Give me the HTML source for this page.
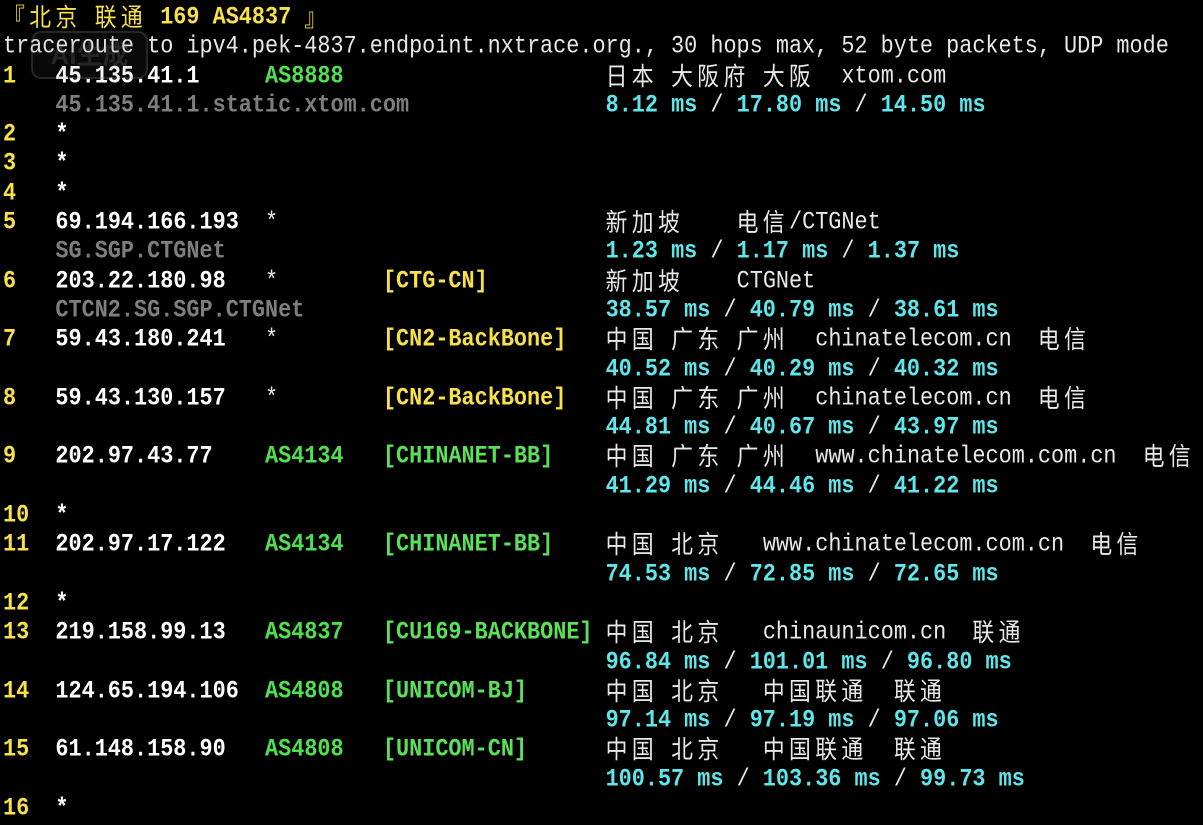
<!DOCTYPE html>
<html><head><meta charset="utf-8"><style>
html,body{margin:0;padding:0;background:#000;width:1203px;height:819px;overflow:hidden}
.t{position:absolute;left:3px;top:3px;font-family:"Liberation Mono",monospace;font-size:21.83px;color:#f2f2f2}
.t div{white-space:pre;height:29.3px;line-height:29.3px;overflow:visible;transform:scaleY(1.15);transform-origin:50% 55%}
.c{letter-spacing:0.2em;font-family:"Noto Sans CJK SC",sans-serif;font-weight:normal;line-height:20px;display:inline-block;height:20px;vertical-align:-2px}
.y{color:#f7e04a;font-weight:bold}
.yn{color:#f7e04a}
.w{color:#ffffff;font-weight:bold}
.g{color:#4fe04f;font-weight:bold}
.gt{color:#5be05a;font-weight:bold}
.gy{color:#7e7e7e;font-weight:bold}
.cy{color:#5ee6ea;font-weight:bold}
.n{color:#e8e8e8}
.wm{position:absolute;left:31px;top:31px;width:113px;height:44px;border:2px solid rgba(140,140,140,.22);border-radius:10px;background:rgba(120,120,120,.08);color:rgba(150,150,150,.2);font:bold 26px "Liberation Sans","Noto Sans CJK SC",sans-serif;line-height:44px;text-align:center;z-index:2}
</style></head><body>
<div class="wm">AI生成</div>
<div class="t">
<div><span class="yn"><span class="c">『北京</span> <span class="c">联通</span></span> <span class="y">169 AS4837</span> <span class="yn c">』</span></div>
<div><span class="n">traceroute to ipv4.pek-4837.endpoint.nxtrace.org., 30 hops max, 52 byte packets, UDP mode</span></div>
<div><span class="y">1</span>   <span class="w">45.135.41.1</span>     <span class="g">AS8888</span>                    <span class="n"><span class="c">日本</span> <span class="c">大阪府</span> <span class="c">大阪</span>  xtom.com</span></div>
<div>    <span class="gy">45.135.41.1.static.xtom.com</span>               <span class="cy">8.12 ms</span> <span class="n">/</span> <span class="cy">17.80 ms</span> <span class="n">/</span> <span class="cy">14.50 ms</span></div>
<div><span class="y">2</span>   <span class="w">*</span></div>
<div><span class="y">3</span>   <span class="w">*</span></div>
<div><span class="y">4</span>   <span class="w">*</span></div>
<div><span class="y">5</span>   <span class="w">69.194.166.193</span>  <span class="n">*</span>                         <span class="n"><span class="c">新加坡</span>    <span class="c">电信</span>/CTGNet</span></div>
<div>    <span class="gy">SG.SGP.CTGNet</span>                             <span class="cy">1.23 ms</span> <span class="n">/</span> <span class="cy">1.17 ms</span> <span class="n">/</span> <span class="cy">1.37 ms</span></div>
<div><span class="y">6</span>   <span class="w">203.22.180.98</span>   <span class="n">*</span>        <span class="y">[CTG-CN]</span>         <span class="n"><span class="c">新加坡</span>    CTGNet</span></div>
<div>    <span class="gy">CTCN2.SG.SGP.CTGNet</span>                       <span class="cy">38.57 ms</span> <span class="n">/</span> <span class="cy">40.79 ms</span> <span class="n">/</span> <span class="cy">38.61 ms</span></div>
<div><span class="y">7</span>   <span class="w">59.43.180.241</span>   <span class="n">*</span>        <span class="y">[CN2-BackBone]</span>   <span class="n"><span class="c">中国</span> <span class="c">广东</span> <span class="c">广州</span>  chinatelecom.cn  <span class="c">电信</span></span></div>
<div>                                              <span class="cy">40.52 ms</span> <span class="n">/</span> <span class="cy">40.29 ms</span> <span class="n">/</span> <span class="cy">40.32 ms</span></div>
<div><span class="y">8</span>   <span class="w">59.43.130.157</span>   <span class="n">*</span>        <span class="y">[CN2-BackBone]</span>   <span class="n"><span class="c">中国</span> <span class="c">广东</span> <span class="c">广州</span>  chinatelecom.cn  <span class="c">电信</span></span></div>
<div>                                              <span class="cy">44.81 ms</span> <span class="n">/</span> <span class="cy">40.67 ms</span> <span class="n">/</span> <span class="cy">43.97 ms</span></div>
<div><span class="y">9</span>   <span class="w">202.97.43.77</span>    <span class="g">AS4134</span>   <span class="gt">[CHINANET-BB]</span>    <span class="n"><span class="c">中国</span> <span class="c">广东</span> <span class="c">广州</span>  www.chinatelecom.com.cn  <span class="c">电信</span></span></div>
<div>                                              <span class="cy">41.29 ms</span> <span class="n">/</span> <span class="cy">44.46 ms</span> <span class="n">/</span> <span class="cy">41.22 ms</span></div>
<div><span class="y">10</span>  <span class="w">*</span></div>
<div><span class="y">11</span>  <span class="w">202.97.17.122</span>   <span class="g">AS4134</span>   <span class="gt">[CHINANET-BB]</span>    <span class="n"><span class="c">中国</span> <span class="c">北京</span>   www.chinatelecom.com.cn  <span class="c">电信</span></span></div>
<div>                                              <span class="cy">74.53 ms</span> <span class="n">/</span> <span class="cy">72.85 ms</span> <span class="n">/</span> <span class="cy">72.65 ms</span></div>
<div><span class="y">12</span>  <span class="w">*</span></div>
<div><span class="y">13</span>  <span class="w">219.158.99.13</span>   <span class="g">AS4837</span>   <span class="gt">[CU169-BACKBONE]</span> <span class="n"><span class="c">中国</span> <span class="c">北京</span>   chinaunicom.cn  <span class="c">联通</span></span></div>
<div>                                              <span class="cy">96.84 ms</span> <span class="n">/</span> <span class="cy">101.01 ms</span> <span class="n">/</span> <span class="cy">96.80 ms</span></div>
<div><span class="y">14</span>  <span class="w">124.65.194.106</span>  <span class="g">AS4808</span>   <span class="gt">[UNICOM-BJ]</span>      <span class="n"><span class="c">中国</span> <span class="c">北京</span>   <span class="c">中国联通</span>  <span class="c">联通</span></span></div>
<div>                                              <span class="cy">97.14 ms</span> <span class="n">/</span> <span class="cy">97.19 ms</span> <span class="n">/</span> <span class="cy">97.06 ms</span></div>
<div><span class="y">15</span>  <span class="w">61.148.158.90</span>   <span class="g">AS4808</span>   <span class="gt">[UNICOM-CN]</span>      <span class="n"><span class="c">中国</span> <span class="c">北京</span>   <span class="c">中国联通</span>  <span class="c">联通</span></span></div>
<div>                                              <span class="cy">100.57 ms</span> <span class="n">/</span> <span class="cy">103.36 ms</span> <span class="n">/</span> <span class="cy">99.73 ms</span></div>
<div><span class="y">16</span>  <span class="w">*</span></div>
</div>
</body></html>
